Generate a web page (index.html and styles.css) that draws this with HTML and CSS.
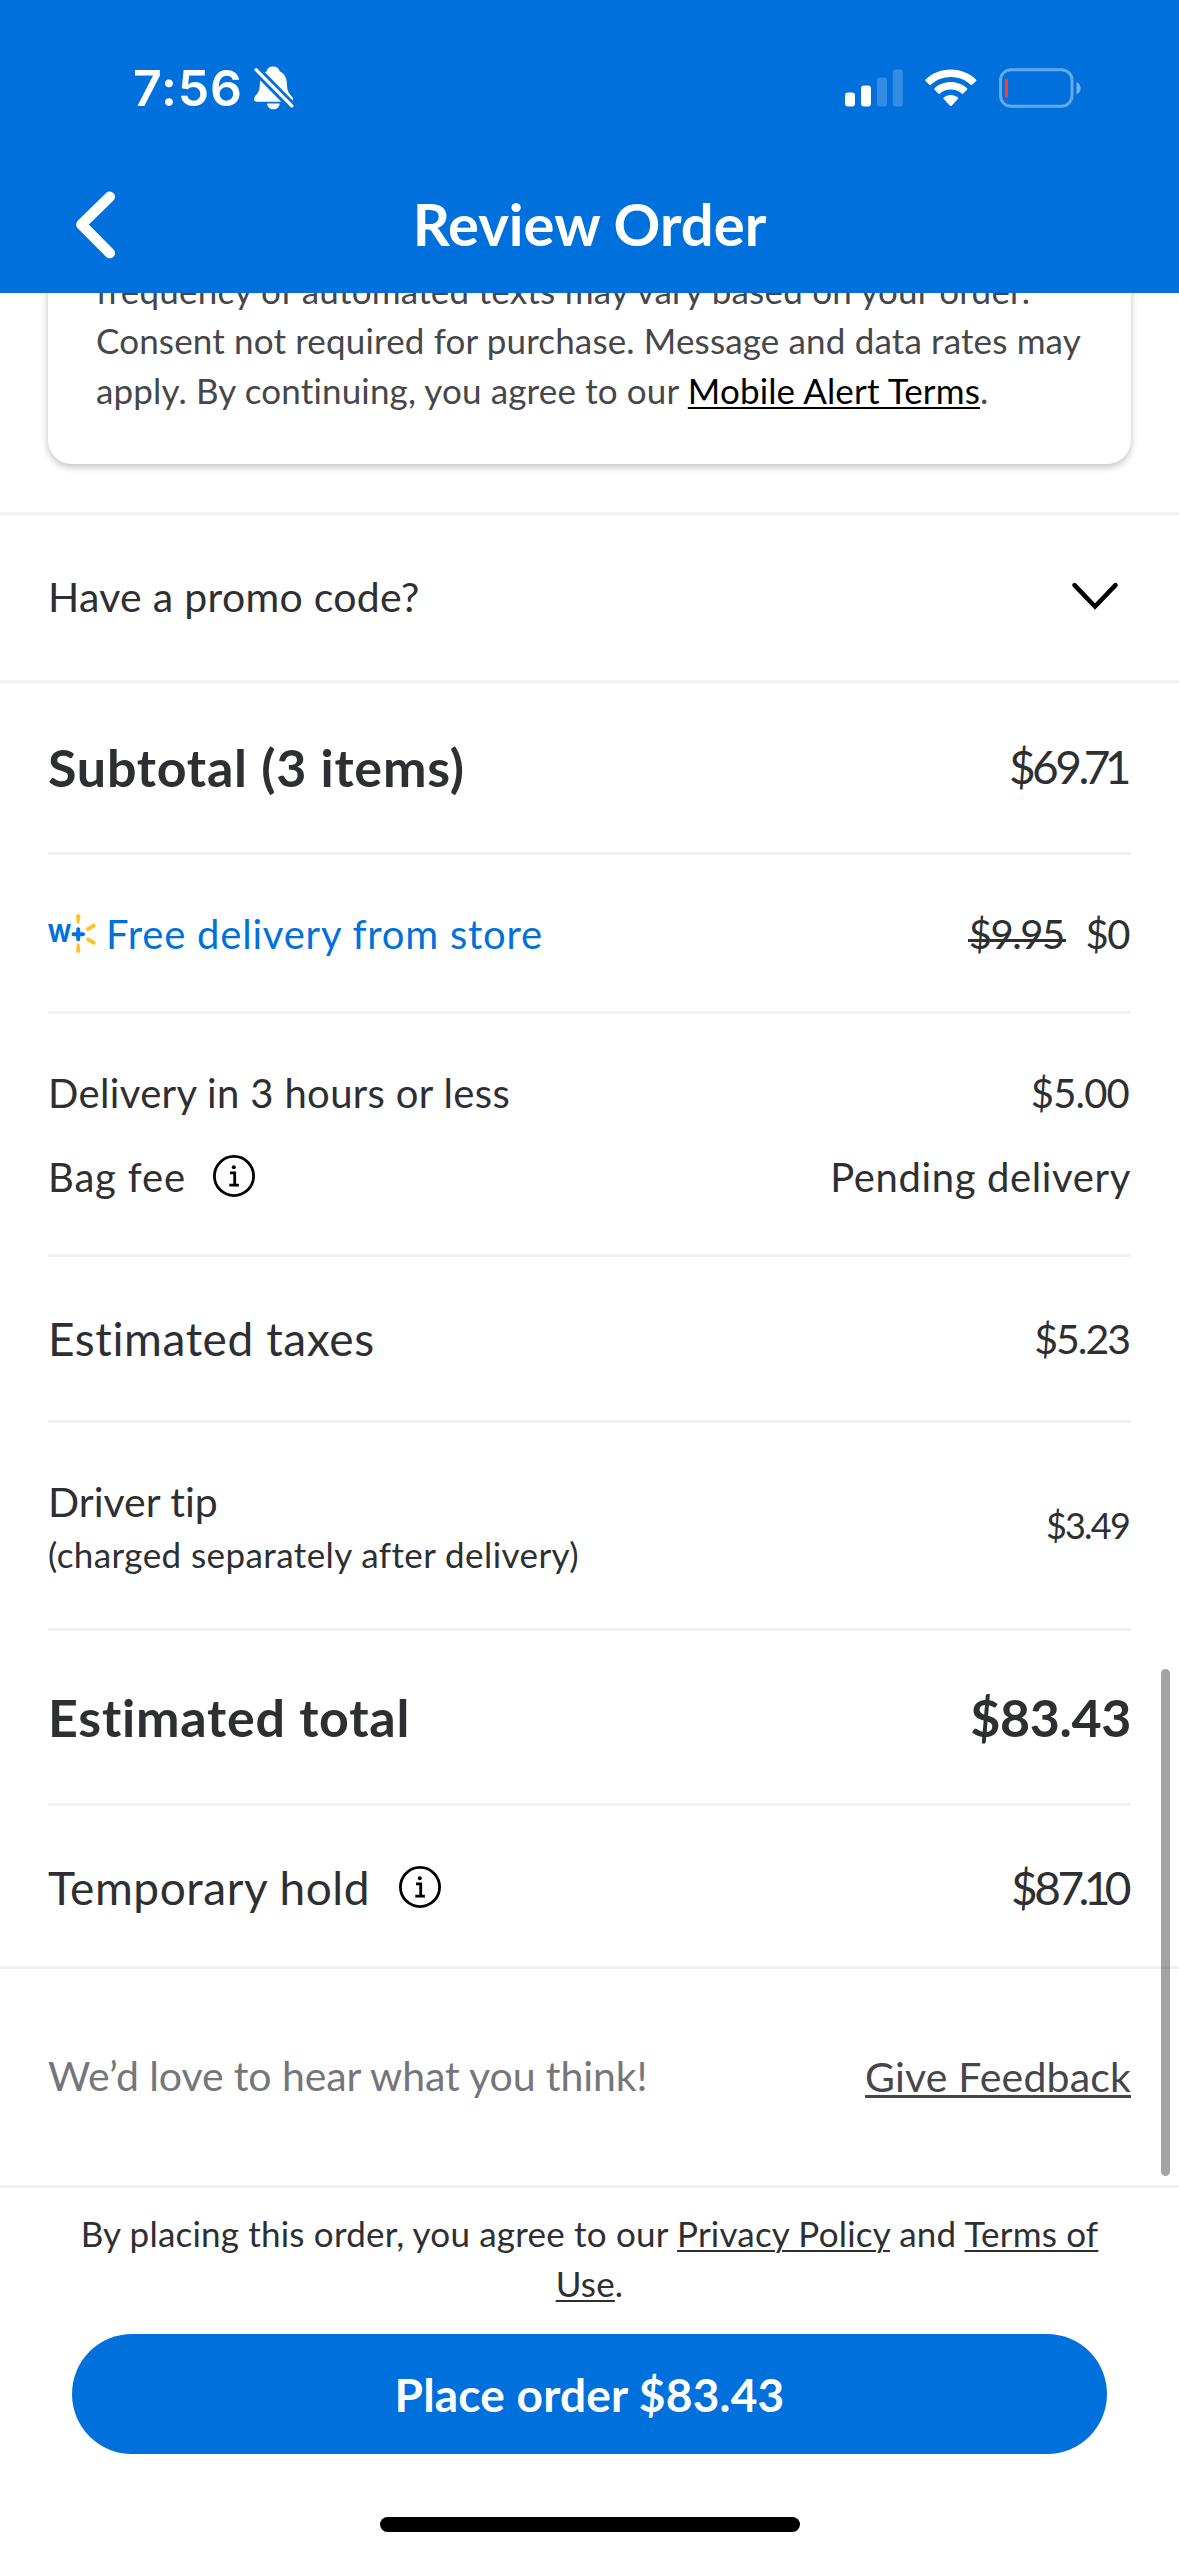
FILE: index.html
```
<!DOCTYPE html>
<html lang="en">
<head>
<meta charset="utf-8">
<title>Review Order</title>
<link rel="stylesheet" href="styles.css">
</head>
<body>
<div class="screen">
  <header class="header">
    <div class="status">
      <div class="status-left">
        <span class="time">7:56</span>
        <svg class="bell" width="40" height="44" viewBox="0 0 40 44">
          <path fill="#fff" d="M19 .5c3.700 0 6 2 6.600 4.800 4.900 2.200 7.200 6.800 7.400 13.200.2 6 1.500 8.200 4 11 1.500 1.700 2 2.700 2 3.700 0 1.800-1 2.500-3 2.500H3.200C1.200 35.700 0 34.800 0 33c0-1.500.8-2.600 2.400-4.300 2.200-2.400 3.300-4.700 3.400-10.200.2-6.400 2.400-11 6.900-13.200C13.300 2.500 15.500.5 19 .5z"/>
          <path fill="#fff" d="M13 37.500h12.800c-.5 3.700-3 5.800-6.400 5.800s-5.900-2.100-6.400-5.800z"/>
          <path stroke="#0071dc" stroke-width="9" d="M-1 .5l42 42.800"/>
          <path stroke="#fff" stroke-width="3.200" stroke-linecap="round" d="M2 3.600l35.800 36.300"/>
        </svg>
      </div>
      <div class="status-right">
        <svg width="58" height="38" viewBox="0 0 58 38" fill="#fff">
          <rect x="0" y="23.500" width="10" height="14" rx="3"/>
          <rect x="16" y="16.500" width="10" height="21" rx="3"/>
          <rect x="32" y="8.500" width="10" height="29" rx="3" opacity=".2"/>
          <rect x="47.800" y=".5" width="10" height="37" rx="3" opacity=".2"/>
        </svg>
        <svg width="52" height="38" viewBox="0 0 52 38" fill="#fff">
          <path d="M25.800.5C35.600.5 44.500 4.300 51 10.400c.5.500.5 1.100 0 1.600l-3.700 3.700c-.5.500-1.100.5-1.600 0C40.400 10.800 33.400 8 25.800 8S11.200 10.800 5.900 15.700c-.5.500-1.100.5-1.600 0L.6 12c-.5-.5-.5-1.100 0-1.600C7.100 4.300 16 .5 25.800.5z"/>
          <path d="M25.800 13c6.200 0 11.900 2.300 16.200 6.200.5.500.5 1.100 0 1.600l-3.700 3.700c-.5.500-1.100.5-1.600 0-2.900-2.500-6.700-4-10.900-4s-8 1.500-10.900 4c-.5.500-1.100.5-1.600 0l-3.700-3.700c-.5-.5-.5-1.100 0-1.600 4.300-3.900 10-6.200 16.200-6.200z"/>
          <path d="M25.800 26c2.700 0 5.200.9 7.100 2.500.5.500.5 1.100 0 1.600l-6.300 6.600c-.5.500-1.100.5-1.600 0l-6.300-6.600c-.5-.5-.5-1.100 0-1.600 1.900-1.600 4.400-2.500 7.100-2.500z"/>
        </svg>
        <svg width="82" height="40" viewBox="0 0 82 40">
          <rect x="1.500" y="1.700" width="71.500" height="36.600" rx="10.500" fill="none" stroke="#fff" stroke-width="3" opacity=".4"/>
          <path fill="#fff" opacity=".45" d="M77.500 14v12.400c2.600-1.100 4.200-3.500 4.200-6.200s-1.600-5.100-4.200-6.200z"/>
          <rect x="5.800" y="10.700" width="3.200" height="19" rx="1" fill="#ff3b30"/>
        </svg>
      </div>
    </div>
    <div class="nav">
      <svg class="back" width="40" height="68" viewBox="0 0 40 68"><path fill="none" stroke="#fff" stroke-width="10.500" stroke-linecap="round" stroke-linejoin="round" d="M33.800 5.800L5.400 33.500l28.400 28.600"/></svg>
      <h1 class="title">Review Order</h1>
      <span class="nav-end"></span>
    </div>
  </header>

  <main class="content">
    <section class="card">
      <p class="card-line card-first">frequency of automated texts may vary based on your order.</p>
      <p class="card-line">Consent not required for purchase. Message and data rates may</p>
      <p class="card-line">apply. By continuing, you agree to our <a class="alert-link">Mobile Alert Terms</a>.</p>
    </section>

    <section class="promo">
      <span class="text-md">Have a promo code?</span>
      <svg class="chevron" width="48" height="28" viewBox="0 0 48 28"><path fill="none" stroke="#000" stroke-width="4.600" stroke-linecap="round" d="M3.500 3.200L24 24.500 44.500 3.200"/></svg>
    </section>

    <section class="summary">
      <div class="row row-subtotal">
        <span class="text-strong">Subtotal (3 items)</span>
        <span class="price-lg">$69<span class="tight">.7</span>1</span>
      </div>
      <div class="row row-free">
        <span class="free">
          <svg class="logo" width="50" height="42" viewBox="0 0 50 42">
            <text class="logo-w" x="0" y="30.200" textLength="23" lengthAdjust="spacingAndGlyphs">w</text>
            <path stroke="#0071dc" stroke-width="4" stroke-linecap="round" d="M25.500 22.300h9.500M30.200 17.300v10"/>
            <g fill="#ffc220">
              <path d="M28 4.200c0-2.600 4.400-2.600 4.400 0l-.8 6.600c-.3 1.300-2.500 1.300-2.800 0z"/>
              <path d="M28 39c0 2.600 4.400 2.600 4.400 0l-.8-6.600c-.3-1.300-2.500-1.300-2.800 0z"/>
            </g>
            <path stroke="#ffc220" stroke-width="3.800" stroke-linecap="round" d="M40 17l5.800-3.400M40 27.400l5.800 3.400"/>
          </svg>
          <span class="free-text">Free delivery from store</span>
        </span>
        <span class="price-pair"><span class="price-md price-old">$9.95</span><span class="price-md">$0</span></span>
      </div>
      <div class="group">
        <div class="line">
          <span class="text-sm">Delivery in 3 hours or less</span>
          <span class="price-md price-fee">$5.00</span>
        </div>
        <div class="line">
          <span class="with-info">
            <span class="text-bag">Bag fee</span>
            <svg class="info" width="42" height="42" viewBox="0 0 42 42"><circle cx="21" cy="21" r="19.600" fill="none" stroke="#000" stroke-width="2.800"/><circle cx="20.800" cy="12.300" r="2" /><path fill="none" stroke="#000" stroke-width="2.800" d="M17 17.900h4.700v12.300M16.300 30.200h9.600"/></svg>
          </span>
          <span class="text-pending">Pending delivery</span>
        </div>
      </div>
      <div class="row row-tax">
        <span class="text-lg">Estimated taxes</span>
        <span class="price-md price-tax">$5.23</span>
      </div>
      <div class="row row-tip">
        <span class="tip">
          <span class="tip-label">Driver tip</span>
          <span class="tip-note">(charged separately after delivery)</span>
        </span>
        <span class="price-sm">$3.49</span>
      </div>
      <div class="row row-total">
        <span class="text-strong">Estimated total</span>
        <span class="price-strong">$83.43</span>
      </div>
      <div class="row row-hold">
        <span class="with-info">
          <span class="text-hold">Temporary hold</span>
          <svg class="info" width="42" height="42" viewBox="0 0 42 42"><circle cx="21" cy="21" r="19.600" fill="none" stroke="#000" stroke-width="2.800"/><circle cx="20.800" cy="12.300" r="2" /><path fill="none" stroke="#000" stroke-width="2.800" d="M17 17.900h4.700v12.300M16.300 30.200h9.600"/></svg>
        </span>
        <span class="price-lg">$8<span class="tight">7.1</span>0</span>
      </div>
    </section>

    <section class="feedback">
      <span class="feedback-text">We’d love to hear what you think!</span>
      <a class="feedback-link">Give Feedback</a>
    </section>
    <div class="scrollbar"></div>
  </main>

  <footer class="footer">
    <p class="terms">By placing this order, you agree to our <a class="link">Privacy Policy</a> and <a class="link">Terms of<br>Use</a>.</p>
    <button class="place">Place order $83.43</button>
    <div class="home"></div>
  </footer>
</div>
</body>
</html>
```
FILE: styles.css
```
* { box-sizing: border-box; }
body { margin: 0; background: #fff; }
p, h1 { margin: 0; }

.screen {
  width: 1179px;
  height: 2556px;
  display: flex;
  flex-direction: column;
  overflow: hidden;
  background: #fff;
  color: #2e2f32;
  font-family: Lato, "Liberation Sans", sans-serif;
  font-variant-ligatures: none;
  line-height: 60px;
  white-space: nowrap;
}
svg { display: block; flex: none; overflow: visible; }

/* header */
.header { height: 293px; flex: none; background: #0071dc; color: #fff; position: relative; z-index: 1; }
.status { height: 152px; padding: 24px 98px 0 133px; display: flex; align-items: center; justify-content: space-between; }
.status-left { display: flex; align-items: center; gap: 11px; }
.status-right { display: flex; align-items: center; gap: 22px; }
.time { font: 600 50px/60px Inter, sans-serif; letter-spacing: .8px; }
.nav { height: 141px; padding: 0 76px; display: grid; grid-template-columns: 40px 1fr 40px; align-items: center; }
.back { margin-top: 4px; }
.title { font-size: 58px; font-weight: 700; text-align: center; padding-top: 2px; }

/* scrolled content */
.content { height: 1895px; flex: none; position: relative; display: flex; flex-direction: column; overflow: hidden; }
.card {
  flex: none;
  margin: -60px 48px 48px;
  padding: 32px 48px 49px;
  border-radius: 24px;
  box-shadow: 0 3px 6px 1px rgba(0, 0, 0, .2);
  color: #46474a;
  font-size: 35px;
  line-height: 50px;
  letter-spacing: .15px;
}
.card-first { letter-spacing: .22px; }
.alert-link { color: #000; text-decoration: underline 2px; text-underline-offset: 3px; }

.promo {
  height: 171px;
  flex: none;
  padding: 0 60px 1px 48px;
  display: flex;
  align-items: center;
  justify-content: space-between;
  border-top: 3px solid #f1f1f2;
  border-bottom: 3px solid #f1f1f2;
}
.chevron { margin-top: -2px; }

.summary { flex: none; padding: 0 48px; }
.row { display: flex; align-items: center; justify-content: space-between; border-bottom: 3px solid #f1f1f2; }
.row-subtotal { height: 172px; padding-bottom: 2px; }
.row-free { height: 159px; padding-top: 2px; }
.row-tax { height: 166px; padding-top: 1px; }
.row-tip { height: 208px; padding-bottom: 2px; }
.row-total { height: 175px; }
.row-hold { height: 160px; padding-top: 4px; border-bottom: 0; }
.group { height: 243px; padding: 37px 0 35px; border-bottom: 3px solid #f1f1f2; }
.line { height: 84px; display: flex; align-items: center; justify-content: space-between; }

.text-md { font-size: 41px; letter-spacing: .29px; }
.text-sm { font-size: 40px; letter-spacing: .35px; }
.text-bag { font-size: 40px; letter-spacing: .84px; }
.text-pending { font-size: 40px; letter-spacing: .63px; }
.text-lg { font-size: 46px; letter-spacing: .6px; }
.text-hold { font-size: 46px; letter-spacing: .56px; }
.text-strong { font-size: 52px; font-weight: 700; letter-spacing: .76px; }

.free { display: flex; align-items: center; gap: 8px; color: #0071dc; }
.free-text { font-size: 40px; letter-spacing: .79px; }
.logo { margin-top: -2px; }
.logo-w { font-size: 35px; font-weight: 900; fill: #0071dc; }
.with-info { display: flex; align-items: center; gap: 27px; }
.info { margin-top: -2px; }
.row-hold .with-info { gap: 29px; }

.price-lg { font-size: 46px; letter-spacing: -3.500px; margin-right: 3px; }
.price-lg .tight { letter-spacing: -5.600px; }
.price-md { font-size: 40px; letter-spacing: -1.500px; margin-right: 2px; }
.price-pair { display: flex; gap: 20px; }
.price-old { padding: 0 2px 0 1px; margin-right: 0; background: linear-gradient(#2e2f32, #2e2f32) 0 35px / 100% 3px no-repeat; }
.price-fee { letter-spacing: -.8px; }
.price-tax { font-size: 41px; letter-spacing: -2px; }
.price-sm { font-size: 36px; letter-spacing: -1.780px; margin-right: 2px; }
.price-strong { font-size: 52px; font-weight: 700; letter-spacing: -.4px; }

.tip { display: flex; flex-direction: column; padding-top: 7px; line-height: 53px; }
.tip-label { font-size: 41px; }
.tip-note { font-size: 35px; letter-spacing: .42px; }

.feedback {
  height: 222px;
  flex: none;
  padding: 0 48px 2px;
  display: flex;
  align-items: center;
  justify-content: space-between;
  border-top: 3px solid #f1f1f2;
  border-bottom: 3px solid #f1f1f2;
  font-size: 41px;
}
.feedback-text { color: #74767c; letter-spacing: -.09px; }
.feedback-link { color: #46474a; letter-spacing: .17px; padding-top: 2px; text-decoration: underline 3px; text-underline-offset: 3px; }

.scrollbar { position: absolute; right: 9px; top: 1376px; width: 9px; height: 507px; border-radius: 5px; background: rgba(0, 0, 0, .36); }

/* footer */
.footer { flex: 1; padding: 20px 72px 0; display: flex; flex-direction: column; align-items: center; }
.terms { font-size: 35px; line-height: 50px; letter-spacing: .2px; text-align: center; }
.link { text-decoration: underline 2px; text-underline-offset: 3px; }
.place {
  width: 100%;
  height: 120px;
  margin-top: 26px;
  border: 0;
  border-radius: 60px;
  padding: 2px 0 0;
  background: #0071dc;
  color: #fff;
  font: 700 46px/60px Lato, "Liberation Sans", sans-serif;
  letter-spacing: .22px;
}
.home { width: 420px; height: 15px; margin-top: 63px; border-radius: 8px; background: #000; }
```
